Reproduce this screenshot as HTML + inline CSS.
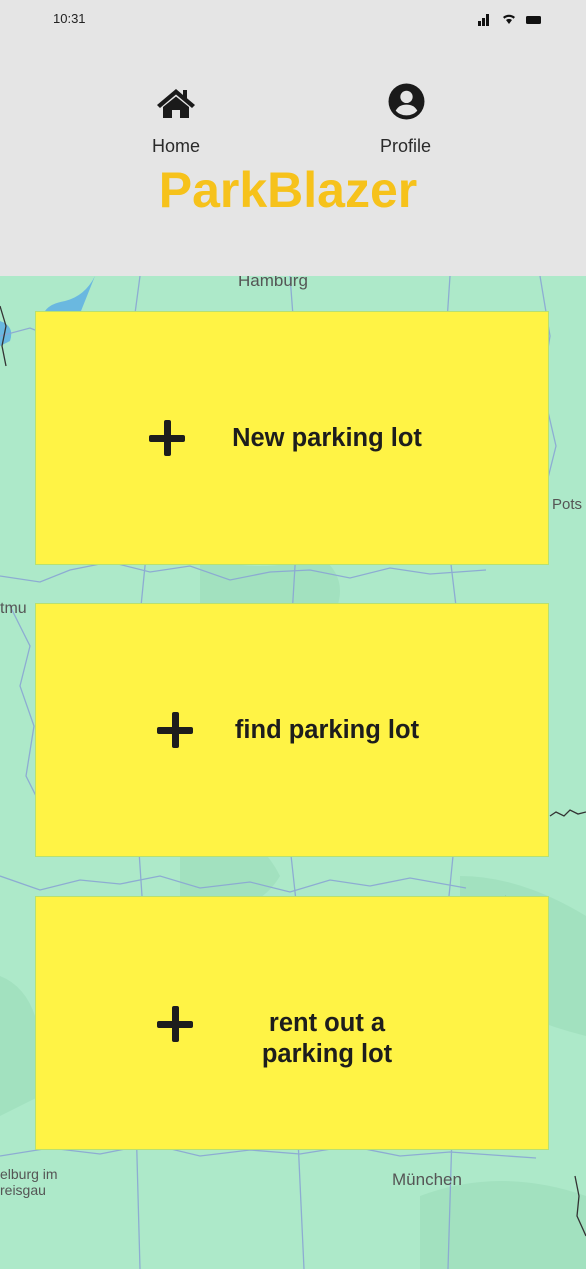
<!DOCTYPE html>
<html><head><meta charset="utf-8"><style>
*{margin:0;padding:0;box-sizing:border-box}
body{width:586px;height:1269px;overflow:hidden;background:#ade9c9;font-family:"Liberation Sans",Arial,sans-serif;position:relative}
.hdr{position:absolute;left:0;top:0;width:586px;height:276px;background:#e5e5e5}
.t{position:absolute;color:#222}
.card{position:absolute;left:35px;width:514px;height:254px;background:#fff345;border:1.5px solid #b8e070}
.card .lbl{position:absolute;font-weight:bold;font-size:25.5px;color:#1d1d1d;text-align:center;line-height:31px;left:176px;width:230px}
.plus{position:absolute;width:36px;height:36px}
.plus:before,.plus:after{content:"";position:absolute;background:#1d1d1d;border-radius:2px}
.plus:before{left:15px;top:0;width:7px;height:36px}
.plus:after{left:0;top:15px;width:36px;height:7px}
.map{position:absolute;left:0;top:276px}
.ml{position:absolute;color:#555;font-size:17px}
</style></head><body>
<svg class="map" width="586" height="993" viewBox="0 0 586 993">
<g fill="#9fdfbd" opacity=".8">
<path d="M200 280 q60 20 120 0 q40 30 0 80 q-80 20 -120 -20z"/>
<path d="M180 560 q70 -20 100 40 q-30 50 -100 20z"/>
<path d="M460 600 q60 0 126 40 v120 q-80 -20 -126 -60z"/>
<path d="M0 700 q50 20 40 120 l-40 20z"/>
<path d="M420 920 q80 -30 166 0 v73 h-166z"/>
</g>
<path d="M95 0 q-10 20 -30 25 q-30 5 -20 30 l30 -5z" fill="#6ab8e0"/>
<path d="M0 45 q15 5 10 20 l-10 5z" fill="#6ab8e0"/>
<g fill="none" stroke="#8aa6d4" stroke-width="1.3" opacity=".9">
<path d="M0 60 l30 -8 l30 12 l30 -6 l30 22 l40 -10 l40 6 l40 -8 l50 12 l40 -6 l40 8 l40 -14 l40 4 l36 -6"/>
<path d="M0 300 l40 6 l30 -12 l40 -8 l40 10 l40 -6 l40 14 l40 -8 l40 -2 l40 8 l40 -10 l40 6 l56 -4"/>
<path d="M0 600 l40 14 l40 -10 l40 4 l40 -8 l40 12 l50 -6 l40 10 l40 -12 l40 6 l40 -8 l56 10"/>
<path d="M0 880 l50 -8 l50 6 l50 -10 l50 12 l50 -6 l50 4 l50 -8 l50 10 l50 -4 l86 6"/>
<path d="M140 0 l-8 60 l10 50 l-6 80 l12 70 l-8 80 l6 90 l-10 100 l8 120 l-10 120 l6 223"/>
<path d="M290 0 l6 80 l-8 70 l10 90 l-6 100 l8 110 l-10 120 l12 110 l-6 140 l8 173"/>
<path d="M450 0 l-4 60 l8 80 l-10 90 l12 100 l-8 90 l10 110 l-12 120 l8 140 l-6 203"/>
<path d="M540 0 l10 60 l-8 50 l14 60 l-20 80"/>
<path d="M10 330 l20 40 l-10 40 l14 40 l-8 50 l20 40"/>
<path d="M60 640 l14 30 l-12 40 l16 40 l-8 50 l20 40"/>
</g>
<g fill="none" stroke="#333" stroke-width="1.3">
<path d="M0 30 l6 20 l-4 20 l4 20"/>
<path d="M550 540 l6 -4 l8 4 l6 -6 l8 4 l8 -2"/>
<path d="M505 620 l8 20 l-2 10 l10 10 l6 16"/>
<path d="M575 900 l4 20 l-2 20 l9 20"/>
</g>
</svg>
<div class="ml" style="left:238px;top:271px">Hamburg</div>
<div class="ml" style="left:552px;top:496px;font-size:15px">Pots</div>
<div class="ml" style="left:0;top:600px;font-size:16px">tmu</div>
<div class="ml" style="left:392px;top:1170px">München</div>
<div class="ml" style="left:0;top:1166px;font-size:14px;line-height:16px">elburg im<br>reisgau</div>

<div class="hdr"></div>
<div class="t" style="left:53px;top:11px;font-size:13px">10:31</div>
<svg style="position:absolute;left:477px;top:12px" width="66" height="16" viewBox="0 0 66 16">
<rect x="1" y="9" width="3" height="5" fill="#111"/><rect x="5" y="6" width="3" height="8" fill="#111"/><rect x="9" y="2" width="3" height="12" fill="#111"/>
<path d="M26 5 a9 9 0 0 1 12 0 l-1.5 1.7 a6.5 6.5 0 0 0 -9 0z M29 8 a5 5 0 0 1 6 0 l-3 4z" fill="#111"/>
<rect x="49" y="4" width="15" height="8" rx="1.5" fill="#111"/>
</svg>
<svg style="position:absolute;left:156px;top:86px" width="40" height="34" viewBox="0 0 40 34">
<path d="M20 3 L1 19 L4 22 L20 8.5 L36 22 L39 19 L31 12.3 V4 h-4 v5 z" fill="#1a1a1a"/>
<path d="M7 21 L20 10.5 L33 21 V32 H24 V24 H16 V32 H7z" fill="#1a1a1a"/>
</svg>
<div class="t" style="left:152px;top:136px;font-size:18px;color:#2a2a2a">Home</div>
<svg style="position:absolute;left:388px;top:83px" width="37" height="37" viewBox="0 0 36 36">
<circle cx="18" cy="18" r="17.5" fill="#1a1a1a"/>
<circle cx="18" cy="13.5" r="6" fill="#e5e5e5"/>
<path d="M7.5 27 q3 -6 10.5 -6 q7.5 0 10.5 6 q-4 4.5 -10.5 4.5 q-6.5 0 -10.5 -4.5z" fill="#e5e5e5"/>
</svg>
<div class="t" style="left:380px;top:136px;font-size:18px;color:#2a2a2a">Profile</div>
<div class="t" style="left:0;width:586px;top:161px;text-align:center;font-size:50px;font-weight:bold;color:#f6c21b;padding-right:10px">ParkBlazer</div>

<div class="card" style="top:311px"><div class="plus" style="left:113px;top:108px"></div><div class="lbl" style="top:111px">New parking lot</div></div>
<div class="card" style="top:603px"><div class="plus" style="left:121px;top:108px"></div><div class="lbl" style="top:111px">find parking lot</div></div>
<div class="card" style="top:896px"><div class="plus" style="left:121px;top:109px"></div><div class="lbl" style="top:111px">rent out a<br>parking lot</div></div>
</body></html>
